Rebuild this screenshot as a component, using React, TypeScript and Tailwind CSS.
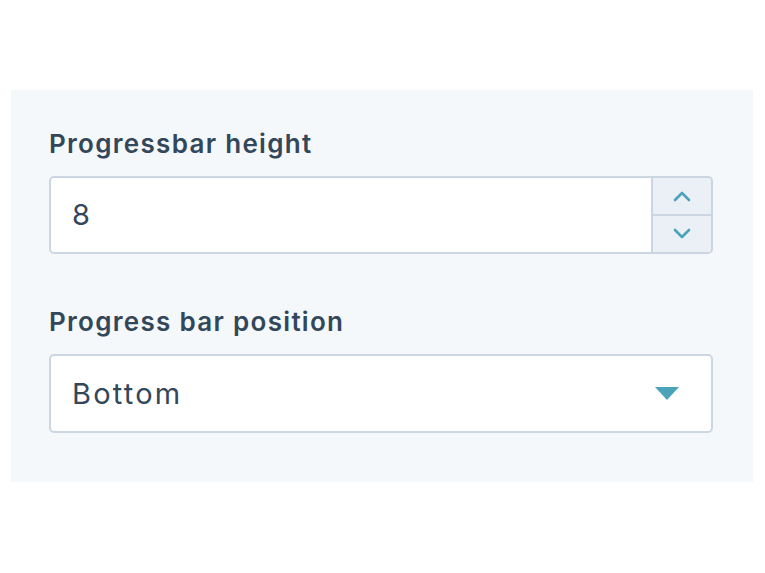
import { useState } from 'react';

const FONT = { fontFamily: 'Inter, "Noto Sans", sans-serif' };

function Chevron({ dir }: { dir: 'up' | 'down' }) {
  return (
    <svg width="20" height="12" viewBox="0 0 20 12" fill="none">
      <path
        d={dir === 'up' ? 'M3 10 L10 3 L17 10' : 'M3 2 L10 9 L17 2'}
        stroke="#4ba3b9"
        strokeWidth="2.6"
        strokeLinecap="round"
        strokeLinejoin="round"
      />
    </svg>
  );
}

export default function App() {
  const [height, setHeight] = useState(8);

  return (
    <div className="w-[765px] h-[573px] bg-white pt-[90px] pl-[11px]" style={FONT}>
      <div className="w-[742px] h-[392px] bg-[#f5f8fa] pl-[38px] pr-[40px] pt-[36px]">
        {/* Progressbar height */}
        <label className="block text-[26px] leading-[36px] font-semibold tracking-[1.3px] text-[#33475b] mb-[14px]">
          Progressbar height
        </label>
        <div className="flex h-[78px] bg-white border-2 border-[#cbd6e2] rounded-[5px] overflow-hidden">
          <div className="flex-1 flex items-center pl-[21px] text-[29px] tracking-[2px] text-[#33475b]">{height}</div>
          <div className="w-[60px] flex flex-col border-l-2 border-[#cbd6e2] bg-[#eaf0f6]">
            <button
              className="flex-1 flex items-center justify-center border-b-2 border-[#cbd6e2]"
              onClick={() => setHeight((h) => h + 1)}
            >
              <Chevron dir="up" />
            </button>
            <button className="flex-1 flex items-center justify-center" onClick={() => setHeight((h) => h - 1)}>
              <Chevron dir="down" />
            </button>
          </div>
        </div>

        {/* Progress bar position */}
        <label className="block text-[26px] leading-[36px] font-semibold tracking-[1.3px] text-[#33475b] mt-[50px] mb-[14px]">
          Progress bar position
        </label>
        <div className="flex items-center justify-between h-[79px] bg-white border-2 border-[#cbd6e2] rounded-[5px] pl-[21px] pr-[32px]">
          <span className="text-[29px] tracking-[2.2px] text-[#33475b]">Bottom</span>
          <svg width="24" height="13" viewBox="0 0 24 13">
            <path d="M0 0 H24 L12 13 Z" fill="#4ba3b9" />
          </svg>
        </div>
      </div>
    </div>
  );
}
